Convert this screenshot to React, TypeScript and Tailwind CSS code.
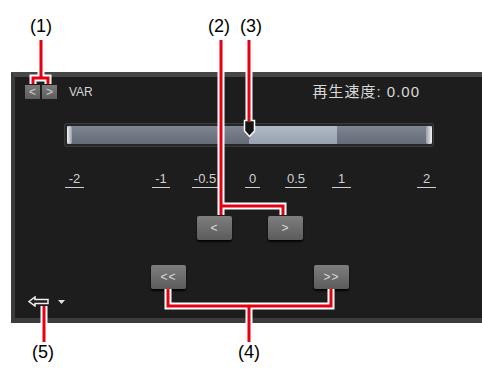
import React from "react";

const ticks = [
  { label: "-2", cls: "left-[50px] w-[19px]" },
  { label: "-1", cls: "left-[137px] w-[18px]" },
  { label: "-0.5", cls: "left-[177px] w-[26px]" },
  { label: "0", cls: "left-[230px] w-[15px]" },
  { label: "0.5", cls: "left-[270px] w-[22px]" },
  { label: "1", cls: "left-[317px] w-[19px]" },
  { label: "2", cls: "left-[402px] w-[19px]" },
];

function SmallBtn({ children }: { children: React.ReactNode }) {
  return (
    <div className="flex h-[14px] w-[15px] items-center justify-center bg-linear-to-b from-[#7a7a7a] to-[#5e5e5e] text-[12px] leading-none text-[#cfcfcf]">
      {children}
    </div>
  );
}

function Btn({ children }: { children: React.ReactNode }) {
  return (
    <div className="flex h-[24px] w-[35px] items-center justify-center rounded-[2px] bg-linear-to-b from-[#7e7e7e] to-[#5c5c5c] text-[12px] leading-none tracking-[1px] text-[#dadada] shadow-[0_2px_2px_rgba(0,0,0,0.85)]">
      {children}
    </div>
  );
}

function Label({ text, cls }: { text: string; cls: string }) {
  return (
    <div className={`absolute w-[34px] text-center text-[18px] leading-none text-black ${cls}`}>
      {text}
    </div>
  );
}

export default function App() {
  return (
    <div className="relative h-[370px] w-[482px] overflow-hidden bg-white font-['Liberation_Sans',Arial,sans-serif]">
      <div className="pl-[11px] pt-[72px]">
        <div className="h-[251px] border-b-[5px] border-l-[4px] border-t-[5px] border-[#3b3b3b] border-t-[#474747] bg-[#1d1d1d]">
          <div className="relative flex h-full flex-col">
            {/* header */}
            <div className="flex items-center pl-[10px] pr-[62px] pt-[7px]">
              <div className="flex gap-[2px]">
                <SmallBtn>&lt;</SmallBtn>
                <SmallBtn>&gt;</SmallBtn>
              </div>
              <span className="ml-[12px] text-[12px] leading-none text-[#d4d4d4]">VAR</span>
              <span className="ml-auto text-[15px] leading-none tracking-[1px] text-[#d8d8d8] font-['Liberation_Sans','Noto_Sans_CJK_JP',sans-serif]">
                再生速度: 0.00
              </span>
            </div>

            {/* slider */}
            <div className="relative ml-[49px] mt-[24px] h-[24px] w-[370px] rounded-[2px] border border-[#3a3a3a] bg-[#262626] pb-[2px] pl-[2px] pr-[1px] pt-[2px]">
              <div className="flex h-full">
                <div className="flex w-[182px] bg-linear-to-b from-[#7e8693] to-[#646b77]">
                  <div className="h-full w-[5px] rounded-[2px] bg-linear-to-r from-[#f2f2f2] to-[#9aa0a8]" />
                </div>
                <div className="w-[88px] bg-linear-to-b from-[#b0b9c5] to-[#98a2af]" />
                <div className="flex w-[95px] justify-end bg-linear-to-b from-[#7e8693] to-[#646b77]">
                  <div className="h-full w-[6px] rounded-[2px] bg-linear-to-l from-[#f2f2f2] to-[#9aa0a8]" />
                </div>
              </div>
            </div>

            {/* scale */}
            <div className="relative mt-[24px] h-[17px]">
              {ticks.map((t) => (
                <div
                  key={t.label}
                  className={`absolute top-0 border-b border-[#d0d0d0] text-center text-[13px] leading-[16px] text-[#d0d0d0] ${t.cls}`}
                >
                  {t.label}
                </div>
              ))}
            </div>

            {/* fine step */}
            <div className="ml-[182px] mt-[28px] flex gap-[36px]">
              <Btn>&lt;</Btn>
              <Btn>&gt;</Btn>
            </div>

            {/* coarse step */}
            <div className="ml-[136px] mt-[25px] flex gap-[128px]">
              <Btn>&lt;&lt;</Btn>
              <Btn>&gt;&gt;</Btn>
            </div>

            {/* bottom */}
            <div className="mt-auto flex items-center gap-[9px] pb-[11px] pl-[13px]">
              <svg width="21" height="11" viewBox="0 0 21 11">
                <path
                  d="M1 5.5 L7 1 V3.5 H20 V7.5 H7 V10 Z"
                  fill="#1d1d1d"
                  stroke="#f0f0f0"
                  strokeWidth="1.5"
                  strokeLinejoin="miter"
                />
              </svg>
              <svg width="7" height="4" viewBox="0 0 7 4">
                <path d="M0 0 H7 L3.5 4 Z" fill="#e0e0e0" />
              </svg>
            </div>
          </div>
        </div>
      </div>

      {/* slider thumb */}
      <svg className="absolute left-[243px] top-[119px]" width="13" height="20" viewBox="0 0 13 20">
        <path d="M6.5 17 V26" stroke="#c05070" strokeWidth="1" />
        <path d="M1.5 1.5 H11.5 V12 L6.5 17.5 L1.5 12 Z" fill="#151515" stroke="#ffffff" strokeWidth="1.5" />
      </svg>

      {/* callout lines */}
      <svg className="pointer-events-none absolute left-0 top-0" width="482" height="370" viewBox="0 0 482 370">
        <g fill="none" stroke="#ffffff" strokeWidth="7" strokeLinejoin="miter">
          <path d="M41 40 V78 M33 84 V78 H48 V84" />
          <path d="M221 40 V215 M221 206 H283 V215" />
          <path d="M249 40 V121" />
          <path d="M168 289 V306 H331 V289 M249 306 V342" />
          <path d="M44 306 V342" />
        </g>
        <g fill="none" stroke="#e60012" strokeWidth="3" strokeLinejoin="miter">
          <path d="M41 40 V78 M33 84 V78 H48 V84" />
          <path d="M221 40 V215 M221 206 H283 V215" />
          <path d="M249 40 V121" />
          <path d="M168 289 V306 H331 V289 M249 306 V342" />
          <path d="M44 306 V342" />
        </g>
      </svg>

      <Label text="(1)" cls="left-[24px] top-[17px]" />
      <Label text="(2)" cls="left-[202px] top-[17px]" />
      <Label text="(3)" cls="left-[234px] top-[17px]" />
      <Label text="(4)" cls="left-[232px] top-[343px]" />
      <Label text="(5)" cls="left-[26px] top-[343px]" />
    </div>
  );
}
